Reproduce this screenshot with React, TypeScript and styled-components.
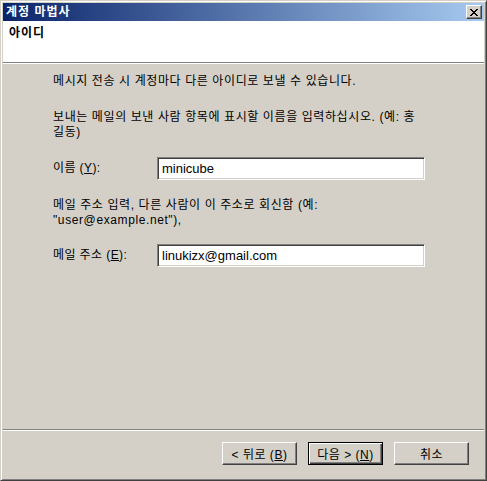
import React from "react";
import styled, { createGlobalStyle } from "styled-components";

const Global = createGlobalStyle`
  html, body { margin: 0; padding: 0; background: #d4d0c8; }
  * { box-sizing: border-box; }
`;

const FONT = `"Liberation Sans", "Noto Sans CJK KR", sans-serif`;

const Window = styled.div`
  width: 487px;
  height: 481px;
  display: flex;
  flex-direction: column;
  background: #d4d0c8;
  border: 1px solid;
  border-color: #d4d0c8 #404040 #404040 #d4d0c8;
  box-shadow: inset 1px 1px #ffffff, inset -1px -1px #808080;
  padding: 2px;
  font-family: ${FONT};
  font-size: 12px;
  color: #000;
`;

const TitleBar = styled.div`
  height: 18px;
  flex: none;
  display: flex;
  align-items: center;
  justify-content: space-between;
  padding: 0 2px 0 3px;
  background: linear-gradient(to right, #0a246a, #a6caf0);
`;

const TitleText = styled.span`
  color: #fff;
  font-weight: bold;
  font-size: 12px;
  line-height: 14px;
  letter-spacing: 1px;
`;

const CloseButton = styled.div`
  width: 16px;
  height: 14px;
  background: #d4d0c8;
  border: 1px solid;
  border-color: #ffffff #404040 #404040 #ffffff;
  box-shadow: inset -1px -1px #808080;
  display: flex;
  align-items: center;
  justify-content: center;
`;

const Header = styled.div`
  height: 41px;
  flex: none;
  background: #fff;
  padding: 5px 6px;
`;

const HeaderTitle = styled.div`
  font-weight: bold;
  font-size: 12px;
  line-height: 15px;
  letter-spacing: 1px;
`;

const Divider = styled.div`
  height: 2px;
  flex: none;
  border-top: 1px solid #808080;
  border-bottom: 1px solid #ffffff;
`;

const Body = styled.div`
  flex: 1;
  padding: 10px 0 0 50px;
  display: flex;
  flex-direction: column;
  letter-spacing: 0.6px;
`;

const Para = styled.p<{ $top: number }>`
  margin: ${(p) => p.$top}px 0 0 0;
  line-height: 15px;
  white-space: nowrap;
`;

const FieldRow = styled.div<{ $top: number }>`
  margin-top: ${(p) => p.$top}px;
  display: flex;
  align-items: center;
`;

const Label = styled.label`
  width: 104px;
  line-height: 15px;
  letter-spacing: 0.4px;
`;

const TextBox = styled.input`
  width: 268px;
  height: 23px;
  border: 1px solid;
  border-color: #808080 #ffffff #ffffff #808080;
  box-shadow: inset 1px 1px #404040, inset -1px -1px #d4d0c8;
  background: #fff;
  padding: 0 3px 0 4px;
  font-family: ${FONT};
  font-size: 13px;
  letter-spacing: 0;
  color: #000;
  outline: none;
`;

const Footer = styled.div`
  flex: none;
  display: flex;
  justify-content: flex-end;
  gap: 11px;
  padding: 11px 15px 13px 0;
`;

const Button = styled.button<{ $default?: boolean }>`
  width: 75px;
  height: 23px;
  padding: 0;
  background: #d4d0c8;
  font-family: ${FONT};
  font-size: 12px;
  letter-spacing: 0.5px;
  color: #000;
  border: 1px solid;
  border-color: ${(p) =>
    p.$default ? "#000000" : "#ffffff #404040 #404040 #ffffff"};
  box-shadow: ${(p) =>
    p.$default
      ? "inset 1px 1px #ffffff, inset -1px -1px #404040, inset -2px -2px #808080"
      : "inset -1px -1px #808080"};
`;

export default function App() {
  return (
    <>
      <Global />
      <Window>
        <TitleBar>
          <TitleText>계정 마법사</TitleText>
          <CloseButton>
            <svg width="8" height="7" viewBox="0 0 8 7" shapeRendering="crispEdges">
              <path
                d="M0 0h2v1h-2zM6 0h2v1h-2zM1 1h2v1h-2zM5 1h2v1h-2zM2 2h4v1h-4zM3 3h2v1h-2zM2 4h4v1h-4zM1 5h2v1h-2zM5 5h2v1h-2zM0 6h2v1h-2zM6 6h2v1h-2z"
                fill="#000"
              />
            </svg>
          </CloseButton>
        </TitleBar>
        <Header>
          <HeaderTitle>아이디</HeaderTitle>
        </Header>
        <Divider />
        <Body>
          <Para $top={0}>메시지 전송 시 계정마다 다른 아이디로 보낼 수 있습니다.</Para>
          <Para $top={21}>
            보내는 메일의 보낸 사람 항목에 표시할 이름을 입력하십시오. (예: 홍
            <br />
            길동)
          </Para>
          <FieldRow $top={17}>
            <Label>
              이름 (<u>Y</u>):
            </Label>
            <TextBox readOnly value="minicube" />
          </FieldRow>
          <Para $top={18}>
            메일 주소 입력, 다른 사람이 이 주소로 회신함 (예:
            <br />
            "user@example.net"),
          </Para>
          <FieldRow $top={16}>
            <Label>
              메일 주소 (<u>E</u>):
            </Label>
            <TextBox readOnly value="linukizx@gmail.com" />
          </FieldRow>
        </Body>
        <Divider />
        <Footer>
          <Button>
            &lt; 뒤로 (<u>B</u>)
          </Button>
          <Button $default>
            다음 &gt; (<u>N</u>)
          </Button>
          <Button>취소</Button>
        </Footer>
      </Window>
    </>
  );
}
